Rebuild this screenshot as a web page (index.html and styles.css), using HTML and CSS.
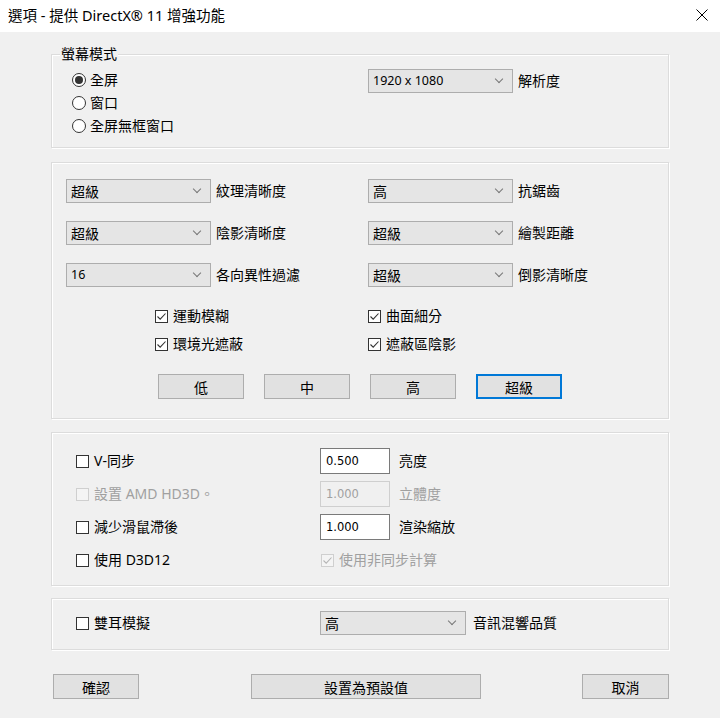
FILE: index.html
```html
<!DOCTYPE html>
<html lang="zh-Hant">
<head>
    <meta charset="UTF-8">
    <meta name="viewport" content="width=device-width, initial-scale=1.0">
    <title>選項</title>
    <link rel="stylesheet" href="styles.css">
</head>
<body>
    <div class="titlebar">
        <span class="title">選項 - 提供 DirectX® 11 增強功能</span>
        <span class="close">
            <svg width="12" height="12" viewBox="0 0 12 12"><path d="M0.5 0.5 L11.5 11.5 M11.5 0.5 L0.5 11.5" stroke="#000" stroke-width="1" fill="none"/></svg>
        </span>
    </div>

    <div class="dialog">
        <!-- 螢幕模式 -->
        <div class="group group-mode">
            <span class="caption">螢幕模式</span>
            <div class="radios">
                <label class="radio"><span class="dot checked"></span>全屏</label>
                <label class="radio"><span class="dot"></span>窗口</label>
                <label class="radio"><span class="dot"></span>全屏無框窗口</label>
            </div>
            <div class="field first">
                <div class="select latin">1920 x 1080</div>
                <span>解析度</span>
            </div>
        </div>

        <!-- 畫質 -->
        <div class="group group-quality">
            <div class="selects">
                <div class="field"><div class="select">超級</div><span>紋理清晰度</span></div>
                <div class="field"><div class="select">高</div><span>抗鋸齒</span></div>
                <div class="field"><div class="select">超級</div><span>陰影清晰度</span></div>
                <div class="field"><div class="select">超級</div><span>繪製距離</span></div>
                <div class="field"><div class="select latin">16</div><span>各向異性過濾</span></div>
                <div class="field"><div class="select">超級</div><span>倒影清晰度</span></div>
            </div>
            <div class="checks">
                <label class="check"><span class="box"><svg width="11" height="11" viewBox="0 0 11 11"><path d="M1.5 5.5 L4.2 8.2 L9.5 2.5" fill="none" stroke="#333" stroke-width="1.1"/></svg></span>運動模糊</label>
                <label class="check"><span class="box"><svg width="11" height="11" viewBox="0 0 11 11"><path d="M1.5 5.5 L4.2 8.2 L9.5 2.5" fill="none" stroke="#333" stroke-width="1.1"/></svg></span>曲面細分</label>
                <label class="check"><span class="box"><svg width="11" height="11" viewBox="0 0 11 11"><path d="M1.5 5.5 L4.2 8.2 L9.5 2.5" fill="none" stroke="#333" stroke-width="1.1"/></svg></span>環境光遮蔽</label>
                <label class="check"><span class="box"><svg width="11" height="11" viewBox="0 0 11 11"><path d="M1.5 5.5 L4.2 8.2 L9.5 2.5" fill="none" stroke="#333" stroke-width="1.1"/></svg></span>遮蔽區陰影</label>
            </div>
            <div class="presets">
                <button class="btn">低</button>
                <button class="btn">中</button>
                <button class="btn">高</button>
                <button class="btn default">超級</button>
            </div>
        </div>

        <!-- 其他 -->
        <div class="group group-misc">
            <label class="check"><span class="box"></span>V-同步</label>
            <div class="input">0.500</div>
            <span class="label">亮度</span>

            <label class="check disabled"><span class="box"></span>設置 AMD HD3D。</label>
            <div class="input disabled">1.000</div>
            <span class="label disabled">立體度</span>

            <label class="check"><span class="box"></span>減少滑鼠滯後</label>
            <div class="input">1.000</div>
            <span class="label">渲染縮放</span>

            <label class="check"><span class="box"></span>使用 D3D12</label>
            <label class="check disabled wide"><span class="box"><svg width="11" height="11" viewBox="0 0 11 11"><path d="M1.5 5.5 L4.2 8.2 L9.5 2.5" fill="none" stroke="#b5b5b5" stroke-width="1.1"/></svg></span>使用非同步計算</label>
        </div>

        <!-- 音訊 -->
        <div class="group group-audio">
            <label class="check"><span class="box"></span>雙耳模擬</label>
            <div class="select">高</div>
            <span class="label">音訊混響品質</span>
        </div>

        <div class="footer">
            <button class="btn ok">確認</button>
            <button class="btn reset">設置為預設值</button>
            <button class="btn cancel">取消</button>
        </div>
    </div>
</body>
</html>
```

FILE: styles.css
```css
body {
    margin: 0;
    width: 720px;
    height: 718px;
    background-color: #f0f0f0;
    font-family: "Noto Sans", "Noto Sans CJK TC", sans-serif;
    font-size: 14px;
    line-height: 20px;
    color: #000;
    overflow: hidden;
}

.titlebar {
    height: 32px;
    background: #fff;
    display: flex;
    align-items: center;
    justify-content: space-between;
    padding: 0 12px 2px 8px;
    box-sizing: border-box;
}

.title {
    font-size: 14.5px;
}

.close svg {
    display: block;
}

.dialog {
    padding: 22px 51px 0;
}

/* Cuadros de grupo */
.group {
    position: relative;
    box-sizing: border-box;
    border: 1px solid #dcdcdc;
    box-shadow: inset 1px 1px 0 #fff, 1px 1px 0 #fff;
}

.caption {
    position: absolute;
    top: -11px;
    left: 8px;
    padding: 0 1px;
    background: #f0f0f0;
    line-height: 20px;
}

.group-mode {
    display: grid;
    grid-template-columns: 296px 1fr;
    padding: 13px 0 10px 20px;
}

.radio {
    display: flex;
    align-items: center;
    gap: 4px;
    height: 23px;
}

.dot {
    width: 14px;
    height: 14px;
    box-sizing: border-box;
    border: 1px solid #333;
    border-radius: 50%;
    background: #fff;
    display: flex;
    align-items: center;
    justify-content: center;
}

.dot.checked::after {
    content: "";
    width: 8px;
    height: 8px;
    border-radius: 50%;
    background: #333;
}

.field {
    display: flex;
    align-items: center;
    gap: 5px;
}

.field.first {
    margin-top: 1px;
    align-self: start;
}

/* Listas desplegables */
.select {
    position: relative;
    width: 145px;
    height: 24px;
    box-sizing: border-box;
    border: 1px solid #adadad;
    background: #e5e5e5;
    padding-left: 4px;
    display: flex;
    align-items: center;
    font-family: "Noto Sans CJK TC", sans-serif;
    font-size: 14px;
}

.select.latin {
    font-family: "Noto Sans", sans-serif;
    font-size: 12.5px;
}

.select::after {
    content: "";
    position: absolute;
    right: 10px;
    top: 6px;
    width: 5px;
    height: 5px;
    border-right: 1px solid #777;
    border-bottom: 1px solid #777;
    transform: rotate(45deg);
}

.group-quality {
    margin-top: 14px;
    padding: 16px 0 19px 14px;
}

.selects {
    display: grid;
    grid-template-columns: 302px 1fr;
    row-gap: 18px;
}

.checks {
    display: grid;
    grid-template-columns: 213px 1fr;
    grid-auto-rows: 28px;
    margin-top: 15px;
    padding-left: 89px;
}

/* Casillas */
.check {
    display: flex;
    align-items: center;
    gap: 5px;
}

.box {
    width: 13px;
    height: 13px;
    box-sizing: border-box;
    border: 1px solid #333;
    background: #fff;
    flex-shrink: 0;
}

.box svg {
    display: block;
}

.check.disabled {
    color: #a0a0a0;
}

.check.disabled .box {
    border-color: #cfcfcf;
    background: #f4f4f4;
}

.presets {
    display: flex;
    gap: 20px;
    margin-top: 16px;
    padding-left: 92px;
}

/* Botones */
.btn {
    height: 25px;
    box-sizing: border-box;
    border: 1px solid #adadad;
    background: #e1e1e1;
    font-family: "Noto Sans CJK TC", sans-serif;
    font-size: 14px;
    color: #000;
    padding: 0;
    cursor: pointer;
}

.presets .btn {
    width: 86px;
}

.btn.default {
    border: 2px solid #0078d7;
}

.group-misc {
    margin-top: 13px;
    padding: 15px 0 12px 24px;
    display: grid;
    grid-template-columns: 244px 70px 1fr;
    grid-auto-rows: 26px;
    row-gap: 7px;
    align-items: center;
}

.input {
    height: 26px;
    box-sizing: border-box;
    border: 1px solid #7a7a7a;
    background: #fff;
    padding-left: 5px;
    display: flex;
    align-items: center;
    font-family: "DejaVu Sans", sans-serif;
    font-size: 11.5px;
}

.input.disabled {
    border-color: #cfcfcf;
    background: #f0f0f0;
    color: #a0a0a0;
}

.label {
    margin-left: 9px;
}

.label.disabled {
    color: #a0a0a0;
}

.check.wide {
    grid-column: 2 / 4;
    margin-left: 1px;
}

.group-audio {
    margin-top: 12px;
    padding: 12px 0 14px 24px;
    display: flex;
    align-items: center;
}

.group-audio .check {
    width: 244px;
}

.group-audio .select {
    width: 146px;
}

.group-audio .label {
    margin-left: 7px;
}

.footer {
    display: flex;
    margin-top: 24px;
    padding-left: 2px;
}

.ok {
    width: 86px;
}

.reset {
    width: 230px;
    margin-left: 112px;
}

.cancel {
    width: 87px;
    margin-left: auto;
}
```
